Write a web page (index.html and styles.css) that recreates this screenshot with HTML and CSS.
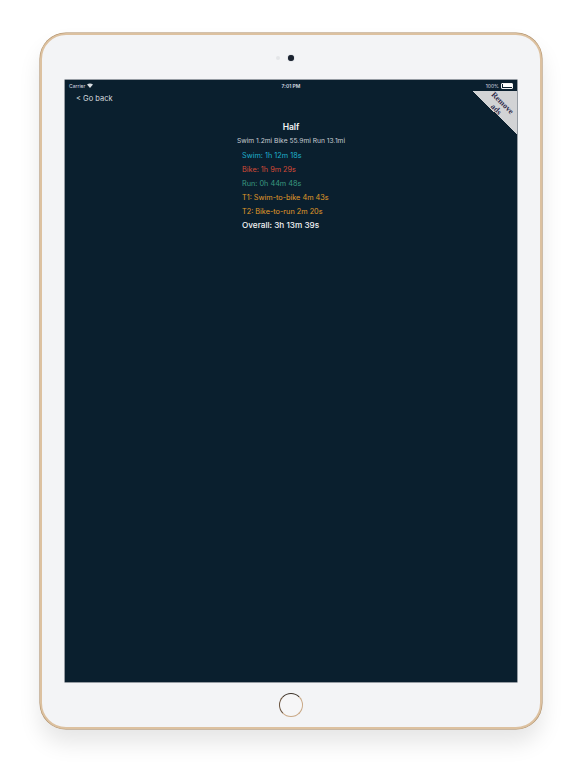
FILE: index.html
```html
<!DOCTYPE html>
<html>
<head>
<meta charset="utf-8">
<link rel="stylesheet" href="styles.css">
</head>
<body>
<div class="device">
  <div class="bezel-top">
    <span class="sensor"></span>
    <span class="camera"></span>
  </div>
  <div class="screen">
    <div class="statusbar">
      <div class="sb-left">Carrier
        <svg class="wifi" viewBox="0 0 10 8" width="6" height="5"><path d="M5 8 L0 2.5 Q5 -1.5 10 2.5 Z" fill="#d8dde2"/></svg>
      </div>
      <div class="sb-center">7:01 PM</div>
      <div class="sb-right">100%<span class="battery"><span class="battery-fill"></span></span></div>
    </div>
    <div class="nav">&lt; Go back</div>
    <div class="ribbon"><div class="ribbon-text">Remove<br>ads</div></div>
    <div class="content">
      <div class="title">Half</div>
      <div class="subtitle">Swim 1.2mi Bike 55.9mi Run 13.1mi</div>
      <div class="list">
        <div class="row swim">Swim: 1h 12m 18s</div>
        <div class="row bike">Bike: 1h 9m 29s</div>
        <div class="row run">Run: 0h 44m 48s</div>
        <div class="row trans">T1: Swim-to-bike 4m 43s</div>
        <div class="row trans">T2: Bike-to-run 2m 20s</div>
        <div class="row overall">Overall: 3h 13m 39s</div>
      </div>
    </div>
  </div>
  <div class="bezel-bottom">
    <span class="home"></span>
  </div>
</div>
</body>
</html>
```
FILE: styles.css
```css
html, body {
  margin: 0;
  padding: 0;
  background: #ffffff;
}
body {
  width: 576px;
  height: 768px;
  overflow: hidden;
  font-family: Inter, "Liberation Sans", sans-serif;
}
.device {
  box-sizing: border-box;
  margin: 33px 0 0 40px;
  width: 502px;
  height: 696px;
  border-radius: 26px;
  background: #f3f4f6;
  border: 2px solid #dcc1a0;
  box-shadow: 0 0 0 0.5px #a8865e, 0 14px 22px rgba(0,0,0,0.10);
  display: flex;
  flex-direction: column;
  align-items: center;
}
.bezel-top {
  height: 45px;
  width: 100%;
  display: flex;
  justify-content: center;
  align-items: center;
  gap: 8px;
}
.sensor {
  width: 4px;
  height: 4px;
  border-radius: 50%;
  background: #e4e5e8;
  margin-left: -12px;
}
.camera {
  width: 6px;
  height: 6px;
  border-radius: 50%;
  background: #1b2330;
  box-shadow: 0 0 1px #606a78;
}
.screen {
  position: relative;
  width: 452px;
  height: 602px;
  background: #0a1f2e;
  box-shadow: 0 0 0 0.5px #3a4550;
  color: #e6e8ea;
}
.statusbar {
  height: 11px;
  display: flex;
  align-items: center;
  justify-content: space-between;
  padding: 0 4px;
  font-size: 5px;
  color: #d8dde2;
  position: relative;
}
.sb-left {
  display: flex;
  align-items: center;
  gap: 2px;
}
.sb-center {
  position: absolute;
  left: 0;
  right: 0;
  text-align: center;
  top: 3px;
  font-weight: 600;
}
.sb-right {
  display: flex;
  align-items: center;
  gap: 1px;
}
.battery {
  display: inline-block;
  width: 10px;
  height: 4px;
  border: 0.5px solid #f2f2f2;
  border-radius: 1px;
  margin-left: 1px;
  position: relative;
}
.battery-fill {
  position: absolute;
  inset: 0.5px;
  background: #ffffff;
}
.nav {
  margin: 3px 0 0 11px;
  font-size: 7.5px;
  color: #d6dadf;
  height: 12px;
}
.ribbon {
  position: absolute;
  top: 11px;
  right: 0;
  width: 45px;
  height: 43px;
  background: linear-gradient(to bottom left, #d2d3d5 50%, transparent 50%);
}
.ribbon-text {
  position: absolute;
  left: 7px;
  top: 7px;
  width: 40px;
  text-align: center;
  font-family: "Liberation Serif", serif;
  font-weight: bold;
  font-size: 8px;
  line-height: 8.5px;
  color: #2d2a4a;
  transform: rotate(45deg);
}
.content {
  display: flex;
  flex-direction: column;
  align-items: center;
  padding-top: 16px;
}
.title {
  font-size: 8.5px;
  font-weight: 600;
  color: #f2f3f4;
  height: 15px;
}
.subtitle {
  font-size: 6.7px;
  color: #c9cdd2;
  height: 14px;
}
.list {
  align-self: flex-start;
  margin-left: 177px;
  display: flex;
  flex-direction: column;
}
.row {
  font-size: 7.3px;
  height: 14px;
  line-height: 9px;
}
.swim { color: #1fb0cc; }
.bike { color: #d64a36; }
.run { color: #3a9a80; }
.trans { color: #e09a28; }
.overall {
  color: #f3f4f5;
  font-size: 8.2px;
  font-weight: 500;
}
.bezel-bottom {
  flex: 1;
  width: 100%;
  display: flex;
  justify-content: center;
  align-items: center;
}
.home {
  box-sizing: border-box;
  width: 24px;
  height: 24px;
  border-radius: 50%;
  border: 1.5px solid #c9a886;
  border-top-color: #3a3026;
  border-left-color: #6b5540;
  background: #f6f6f7;
}
```
